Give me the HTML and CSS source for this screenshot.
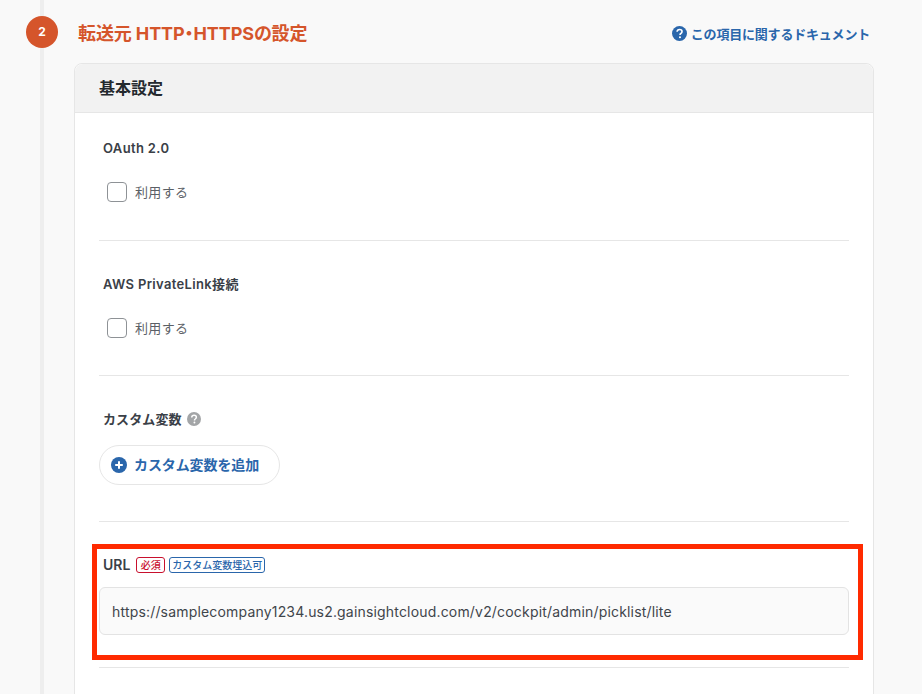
FILE: index.html
```html
<!DOCTYPE html>
<html lang="ja">
<head>
<meta charset="utf-8">
<title>転送元 HTTP・HTTPSの設定</title>
<link rel="stylesheet" href="styles.css">
</head>
<body>
<main class="step">
  <header class="step-head">
    <span class="step-num">2</span>
    <h2 class="step-title">転送元 HTTP・HTTPSの設定</h2>
    <a class="doc-link" href="#">
      <svg class="icon-14" viewBox="0 0 16 16"><circle cx="8" cy="8" r="8" fill="#2a66ab"/><path d="M5.4 6.2C5.5 4.7 6.6 3.8 8.1 3.8c1.5 0 2.6.9 2.6 2.2 0 1-.6 1.5-1.3 2-.6.4-.8.7-.8 1.3v.3" fill="none" stroke="#fff" stroke-width="1.7"/><circle cx="8.5" cy="12" r="1.1" fill="#fff"/></svg>
      この項目に関するドキュメント
    </a>
  </header>
  <section class="card">
    <div class="card-head">基本設定</div>
    <div class="card-body">
      <div class="field field-oauth">
        <div class="label">OAuth 2.0</div>
        <label class="check"><span class="box"></span>利用する</label>
      </div>
      <div class="field field-link">
        <div class="label">AWS PrivateLink接続</div>
        <label class="check"><span class="box"></span>利用する</label>
      </div>
      <div class="field field-vars">
        <div class="label label-kana">カスタム変数
          <svg class="icon-help" viewBox="0 0 16 16"><circle cx="8" cy="8" r="8" fill="#a3a5a7"/><path d="M5.4 6.2C5.5 4.7 6.6 3.8 8.1 3.8c1.5 0 2.6.9 2.6 2.2 0 1-.6 1.5-1.3 2-.6.4-.8.7-.8 1.3v.3" fill="none" stroke="#fff" stroke-width="1.7"/><circle cx="8.5" cy="12" r="1.1" fill="#fff"/></svg>
        </div>
        <button class="add-btn" type="button">
          <svg class="icon-16" viewBox="0 0 16 16"><circle cx="8" cy="8" r="8" fill="#2a66ab"/><path d="M8 4.2v7.6M4.2 8h7.6" stroke="#fff" stroke-width="2"/></svg>
          <span class="add-text">カスタム変数を追加</span>
        </button>
      </div>
      <div class="field field-url">
        <div class="label label-tags"><span class="url-name">URL</span><span class="tag tag-red">必須</span><span class="tag tag-blue">カスタム変数埋込可</span></div>
        <div class="url-input">https://samplecompany1234.us2.gainsightcloud.com/v2/cockpit/admin/picklist/lite</div>
        <div class="highlight"></div>
      </div>
    </div>
  </section>
</main>
</body>
</html>
```

FILE: styles.css
```css
* { box-sizing: border-box; }
html, body { margin: 0; height: 694px; overflow: hidden; }
body {
  background: #f9f9f9;
  color: #3a4047;
  font-family: Inter, "Noto Sans CJK JP", sans-serif;
}
.step { position: relative; padding: 16px 0 0 26px; width: 874px; }
.step::before {
  content: "";
  position: absolute;
  left: 40px; top: 0;
  width: 4px; height: 694px;
  background: #eeeeee;
}
.step-head { position: relative; display: flex; align-items: center; height: 32px; }
.step-num {
  width: 32px; height: 32px; border-radius: 50%;
  background: #d5552b; color: #fff;
  display: flex; align-items: center; justify-content: center;
  padding-bottom: 1px;
  font-size: 12px; font-weight: 700;
}
.step-title {
  margin: 3px 0 0 20px;
  font-size: 18px; font-weight: 700; color: #d5552b;
  font-feature-settings: "palt";
  letter-spacing: -0.1px;
  line-height: 32px;
}
.doc-link {
  margin-left: auto;
  margin-right: 4px;
  display: flex; align-items: center; gap: 4px;
  color: #2a66ab; font-size: 13px; font-weight: 600;
  letter-spacing: -0.2px;
  text-decoration: none;
  margin-top: 2px;
}
.icon-14 { width: 15px; height: 15px; }
.card {
  position: relative;
  margin: 15px 0 0 48px;
  width: 800px;
  height: 640px;
  background: #fff;
  border: 1px solid #e6e6e6;
  border-radius: 8px 8px 0 0;
}
.card-head {
  height: 49px;
  padding-left: 24px;
  background: #f2f2f2;
  border-bottom: 1px solid #e6e6e6;
  border-radius: 8px 8px 0 0;
  font-size: 16px; font-weight: 700; color: #24292e;
  line-height: 48px;
}
.card-body { padding: 0 24px; }
.field { position: relative; border-bottom: 1px solid #e6e6e6; }
.field-oauth { height: 128px; padding-top: 26px; }
.field-link { height: 135px; padding-top: 34px; }
.field-vars { height: 146px; padding-top: 34px; }
.field-url { height: 146px; padding-top: 34px; }
.label {
  padding-left: 4px;
  font-size: 13px; font-weight: 600; color: #3a4047;
  letter-spacing: 0.35px;
  line-height: 18px;
  display: flex; align-items: center;
}
.label-kana { letter-spacing: 0.1px; }
.icon-help { width: 14px; height: 14px; margin-left: 5px; }
.check {
  display: flex; align-items: center;
  margin: 25px 0 0 8px;
  font-size: 13px; color: #5b6066;
  letter-spacing: 0.35px;
  line-height: 20px;
}
.box {
  width: 20px; height: 20px; margin-right: 8px;
  background: #fff;
  border: 1px solid #8e9296;
  border-radius: 4px;
}
.add-btn {
  display: flex; align-items: center; gap: 7px;
  margin-top: 17px;
  width: 181px; height: 40px;
  padding: 0 0 0 11px;
  background: #fff;
  border: 1px solid #e6e6e6;
  border-radius: 20px;
  color: #2a66ab;
  font: 600 14px Inter, "Noto Sans CJK JP", sans-serif;
}
.add-text { padding-bottom: 2px; letter-spacing: -0.1px; }
.icon-16 { width: 16px; height: 16px; }
.label-tags { gap: 4px; }
.url-name { font-size: 14px; margin-right: 2px; letter-spacing: 0; }
.tag {
  display: inline-flex; align-items: center;
  height: 16px; padding: 0 2px;
  border: 1px solid; border-radius: 3px;
  font-size: 10px; font-weight: 500;
  letter-spacing: 0;
  background: #fff;
}
.tag-red { color: #c8102e; border-color: #c8102e; padding: 0 3.5px; }
.tag-blue { color: #2a66ab; border-color: #2a66ab; }
.url-input {
  margin-top: 13px;
  height: 48px;
  padding-left: 12px;
  background: #fafafa;
  border: 1px solid #e3e3e3;
  border-radius: 6px;
  font-size: 14px; color: #3f454b;
  letter-spacing: 0.18px;
  line-height: 47px;
  white-space: nowrap;
}
.highlight {
  position: absolute;
  left: -7px; top: 22px;
  width: 771px; height: 116px;
  border: 5px solid #ff2a00;
}
```
